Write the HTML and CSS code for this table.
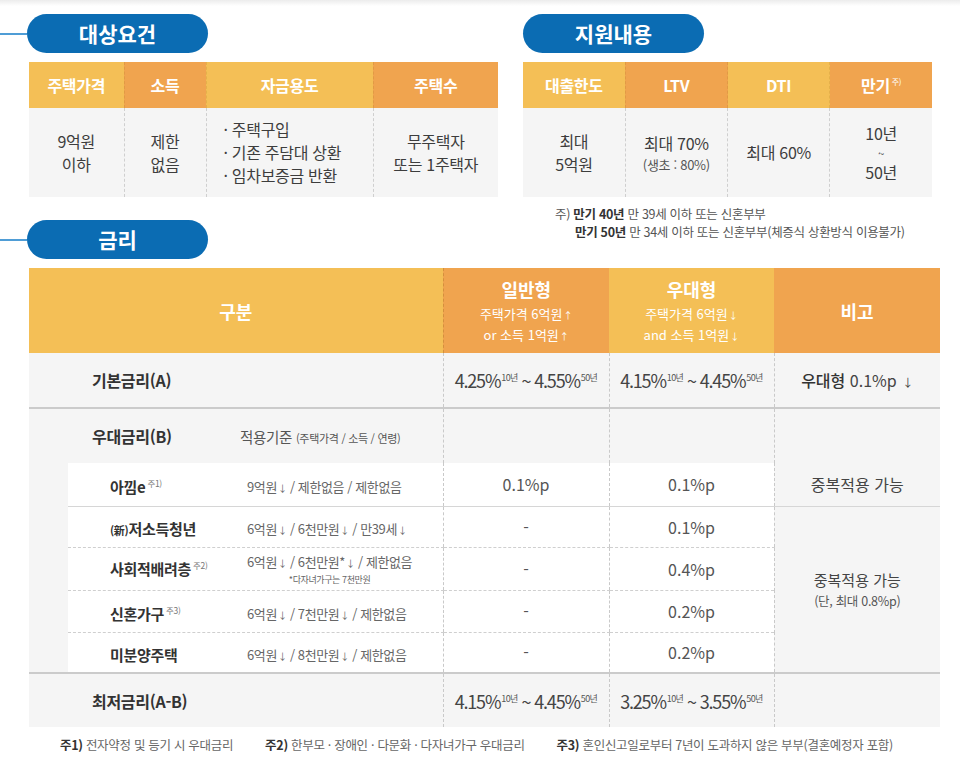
FILE: index.html
```html
<!DOCTYPE html>
<html lang="ko">
<head>
<meta charset="utf-8">
<title>대상요건 · 지원내용 · 금리</title>
<link rel="stylesheet" href="styles.css">
</head>
<body>
<div class="page">
  <div class="title"><span class="rule"></span><h2 class="pill">대상요건</h2></div>
  <div class="title title-right"><h2 class="pill">지원내용</h2></div>

  <table class="info info-req">
    <colgroup><col class="w95"><col class="w82"><col class="w167"><col class="w125"></colgroup>
    <thead>
      <tr><th class="y">주택가격</th><th class="o">소득</th><th class="y">자금용도</th><th class="o">주택수</th></tr>
    </thead>
    <tbody>
      <tr>
        <td><div>9억원</div><div>이하</div></td>
        <td><div>제한</div><div>없음</div></td>
        <td class="list"><div>· 주택구입</div><div>· 기존 주담대 상환</div><div>· 임차보증금 반환</div></td>
        <td><div>무주택자</div><div>또는 1주택자</div></td>
      </tr>
    </tbody>
  </table>

  <table class="info info-sup">
    <thead>
      <tr><th class="y">대출한도</th><th class="o">LTV</th><th class="y">DTI</th><th class="o">만기<sup class="jn">주)</sup></th></tr>
    </thead>
    <tbody>
      <tr>
        <td><div>최대</div><div>5억원</div></td>
        <td><div>최대 70%</div><div class="small">(생초 : 80%)</div></td>
        <td>최대 60%</td>
        <td class="term"><div>10년</div><div class="tilde">~</div><div>50년</div></td>
      </tr>
    </tbody>
  </table>

  <div class="title title-rate"><span class="rule"></span><h2 class="pill">금리</h2></div>
  <div class="note">
    <p>주) <b>만기 40년</b> 만 39세 이하 또는 신혼부부</p>
    <p class="indent"><b>만기 50년</b> 만 34세 이하 또는 신혼부부(체증식 상환방식 이용불가)</p>
  </div>

  <table class="rates">
    <colgroup><col class="c-ind"><col class="c-lab"><col class="c-gen"><col class="c-pre"><col class="c-big"></colgroup>
    <thead>
      <tr>
        <th colspan="2" class="y">구분</th>
        <th class="o type first"><div class="tt">일반형</div><div class="ts">주택가격 6억원<i class="ar">↑</i></div><div class="ts">or 소득 1억원<i class="ar">↑</i></div></th>
        <th class="y type"><div class="tt">우대형</div><div class="ts">주택가격 6억원<i class="ar">↓</i></div><div class="ts">and 소득 1억원<i class="ar">↓</i></div></th>
        <th class="o">비고</th>
      </tr>
    </thead>
    <tbody>
      <tr class="r-basic">
        <td colspan="2" class="main">기본금리(A)</td>
        <td class="c"><span class="pct">4.25%<sup>10년</sup> ~ 4.55%<sup>50년</sup></span></td>
        <td class="c"><span class="pct">4.15%<sup>10년</sup> ~ 4.45%<sup>50년</sup></span></td>
        <td class="c bigo"><b class="bn">우대형</b> 0.1%p <i class="ar">↓</i></td>
      </tr>
      <tr class="r-pref">
        <td colspan="2" class="main"><span class="lab-b">우대금리(B)</span><span class="crit-h">적용기준 <small>(주택가격 / 소득 / 연령)</small></span></td>
        <td class="c"></td>
        <td class="c"></td>
        <td class="c bigo bigo-1" rowspan="2">중복적용 가능</td>
      </tr>
      <tr class="r-sub r-solid h43">
        <td class="indent" rowspan="5"></td>
        <td class="sub"><span class="lab-s">아낌e<sup>주1)</sup></span><span class="crit">9억원<i class="ar">↓</i> / 제한없음 / 제한없음</span></td>
        <td class="c val">0.1%p</td>
        <td class="c val">0.1%p</td>
      </tr>
      <tr class="r-sub r-dash h41">
        <td class="sub"><span class="lab-s"><small class="han">(新)</small>저소득청년</span><span class="crit">6억원<i class="ar">↓</i> / 6천만원<i class="ar">↓</i> / 만39세<i class="ar">↓</i></span></td>
        <td class="c val">-</td>
        <td class="c val">0.1%p</td>
        <td class="c bigo" rowspan="4"><div class="bg-main">중복적용 가능</div><div class="bg-sub">(단, 최대 0.8%p)</div></td>
      </tr>
      <tr class="r-sub r-dash h43">
        <td class="sub"><span class="lab-s">사회적배려층<sup>주2)</sup></span><span class="crit crit-2"><span class="c2-main">6억원<i class="ar">↓</i> / 6천만원*<i class="ar">↓</i> / 제한없음</span><span class="star">*다자녀가구는 7천만원</span></span></td>
        <td class="c val">-</td>
        <td class="c val">0.4%p</td>
      </tr>
      <tr class="r-sub r-dash h42">
        <td class="sub"><span class="lab-s">신혼가구<sup>주3)</sup></span><span class="crit">6억원<i class="ar">↓</i> / 7천만원<i class="ar">↓</i> / 제한없음</span></td>
        <td class="c val">-</td>
        <td class="c val">0.2%p</td>
      </tr>
      <tr class="r-sub h41">
        <td class="sub"><span class="lab-s">미분양주택</span><span class="crit">6억원<i class="ar">↓</i> / 8천만원<i class="ar">↓</i> / 제한없음</span></td>
        <td class="c val">-</td>
        <td class="c val">0.2%p</td>
      </tr>
      <tr class="r-min">
        <td colspan="2" class="main">최저금리(A-B)</td>
        <td class="c"><span class="pct">4.15%<sup>10년</sup> ~ 4.45%<sup>50년</sup></span></td>
        <td class="c"><span class="pct">3.25%<sup>10년</sup> ~ 3.55%<sup>50년</sup></span></td>
        <td class="c"></td>
      </tr>
    </tbody>
  </table>

  <div class="footnotes">
    <p><b>주1)</b> 전자약정 및 등기 시 우대금리</p>
    <p><b>주2)</b> 한부모 · 장애인 · 다문화 · 다자녀가구 우대금리</p>
    <p><b>주3)</b> 혼인신고일로부터 7년이 도과하지 않은 부부(결혼예정자 포함)</p>
  </div>
</div>
</body>
</html>
```

FILE: styles.css
```css
* { box-sizing: border-box; }

body {
  margin: 0;
  background: linear-gradient(to bottom, #ececec 0, #ffffff 6px) no-repeat #fff;
  font-family: "Noto Sans CJK KR", "Noto Sans", sans-serif;
  color: #444;
}

.page {
  display: grid;
  grid-template-columns: 498px 1fr;
  column-gap: 25px;
  padding-top: 14px;
  align-items: start;
}

/* section titles */
.title {
  display: flex;
  align-items: center;
  height: 39px;
}
.rule {
  width: 27px;
  height: 2px;
  background: #4f9dd6;
}
.pill {
  margin: 0;
  width: 181px;
  height: 39px;
  border-radius: 20px;
  background: #0b6cb3;
  color: #fff;
  font-size: 21px;
  font-weight: 700;
  display: flex;
  align-items: center;
  justify-content: center;
  line-height: 1;
}
.title-rate { margin-top: 23px; }

/* small arrows */
.ar {
  font-style: normal;
  font-size: 0.7em;
  margin-left: 1px;
}

/* top info tables */
.info {
  border-collapse: collapse;
  table-layout: fixed;
  margin-top: 9px;
}
.info-req { margin-left: 29px; width: 469px; }
.info-sup { width: 409px; }
.w95 { width: 95px; }
.w82 { width: 82px; }
.w167 { width: 167px; }
.w125 { width: 125px; }

.info th {
  height: 46px;
  padding: 0;
  color: #fff;
  font-size: 16px;
  font-weight: 700;
  letter-spacing: -0.3px;
  border-left: 1px dashed rgba(160, 110, 20, 0.18);
}
.info th:first-child { border-left: 0; }
.info td {
  height: 89px;
  padding: 0;
  background: #f5f5f5;
  font-size: 16px;
  line-height: 23px;
  text-align: center;
  color: #3d3d3d;
  letter-spacing: -0.3px;
  border-left: 1px dashed #cfcfcf;
}
.info td:first-child { border-left: 0; }
.info td.list {
  text-align: left;
  padding-left: 17px;
}
.info td.term { line-height: 23px; }
.info td.term .tilde { font-size: 11px; line-height: 16px; }
.info .small { font-size: 13px; line-height: 19px; color: #555; }
.jn { font-size: 8px; font-weight: 400; vertical-align: 7px; margin-left: 2px; }

.y { background: #f4bf56; }
.o { background: #f0a44f; }

/* note under 지원내용 */
.note {
  margin-top: 8px;
  padding-left: 32px;
  font-size: 12.5px;
  line-height: 18px;
  color: #555;
  letter-spacing: -0.3px;
}
.note p { margin: 0; }
.note b { color: #333; font-weight: 700; }
.note .indent { padding-left: 20px; }

/* rates table */
.rates {
  grid-column: 1 / -1;
  margin: 9px 0 0 29px;
  width: 911px;
  border-collapse: collapse;
  table-layout: fixed;
}
.c-ind { width: 39px; }
.c-lab { width: 375px; }
.c-gen { width: 166px; }
.c-pre { width: 165px; }
.c-big { width: 166px; }

.rates th {
  height: 85px;
  padding: 0;
  color: #fff;
  font-size: 18px;
  font-weight: 700;
  text-align: center;
}
.rates th.first { border-left: 1px dashed rgba(150, 100, 20, 0.3); }
.rates .tt { font-size: 18px; line-height: 26px; margin-bottom: 2px; }
.rates .ts { font-size: 13px; line-height: 19px; font-weight: 400; }

.rates td {
  padding: 0;
  background: #f5f5f5;
  font-size: 16px;
  color: #444;
  text-align: center;
}
.rates td.c { border-left: 1px dashed #c9c9c9; }

.rates td.main {
  text-align: left;
  padding-left: 63px;
  font-size: 16px;
  font-weight: 700;
  color: #333;
  letter-spacing: -0.3px;
}

.r-basic td { height: 55px; }
.r-pref td { height: 55px; border-top: 2px solid #cbcbcb; }
.r-min td { height: 54px; border-top: 2px solid #cbcbcb; }
.h43 td { height: 43px; }
.h41 td { height: 41px; }
.h42 td { height: 42px; }

.pct {
  font-size: 18px;
  letter-spacing: -1.2px;
  color: #444;
}
.pct sup {
  font-size: 9px;
  letter-spacing: -0.6px;
  vertical-align: 7px;
  margin-left: 1px;
  color: #555;
}

.bigo { color: #444; font-size: 15px; }
.bn { font-weight: 500; color: #333; }

.lab-b { display: inline-block; width: 148px; }
.crit-h { font-size: 14.5px; font-weight: 400; color: #555; }
.crit-h small { font-size: 11px; }

.rates td.indent { background: #f5f5f5; }
.rates td.sub {
  background: #fff;
  text-align: left;
  padding-left: 42px;
}
.rates td.val { background: #fff; color: #555; }

.lab-s {
  display: inline-block;
  width: 137px;
  font-size: 15px;
  font-weight: 700;
  color: #333;
  letter-spacing: -0.3px;
  vertical-align: middle;
}
.lab-s sup {
  font-size: 8.5px;
  font-weight: 400;
  color: #777;
  vertical-align: 6px;
  margin-left: 2px;
}
.lab-s .han { font-size: 11px; }
.crit {
  display: inline-block;
  font-size: 13px;
  color: #666;
  letter-spacing: -0.4px;
  vertical-align: middle;
}
.crit-2 {
  display: inline-flex;
  flex-direction: column;
  align-items: center;
}
.crit-2 .c2-main { line-height: 19px; }
.crit-2 .star { font-size: 9px; line-height: 13px; }

.r-solid td.sub,
.r-solid td.val { border-bottom: 1px solid #d6d6d6; }
.r-dash td.sub,
.r-dash td.val { border-bottom: 1px dashed #cfcfcf; }

.bigo-1 {
  vertical-align: bottom;
  padding-bottom: 10px !important;
  border-bottom: 1px solid #d6d6d6;
}
.bg-main { font-size: 15px; line-height: 22px; }
.bg-sub { font-size: 12.5px; line-height: 19px; color: #555; letter-spacing: -0.3px; }

/* footnotes */
.footnotes {
  grid-column: 1 / -1;
  display: flex;
  gap: 32px;
  padding-left: 60px;
  margin-top: 9px;
  font-size: 12.5px;
  line-height: 18px;
  color: #666;
  letter-spacing: -0.3px;
}
.footnotes p { margin: 0; }
.footnotes b { color: #333; font-weight: 700; }
```
